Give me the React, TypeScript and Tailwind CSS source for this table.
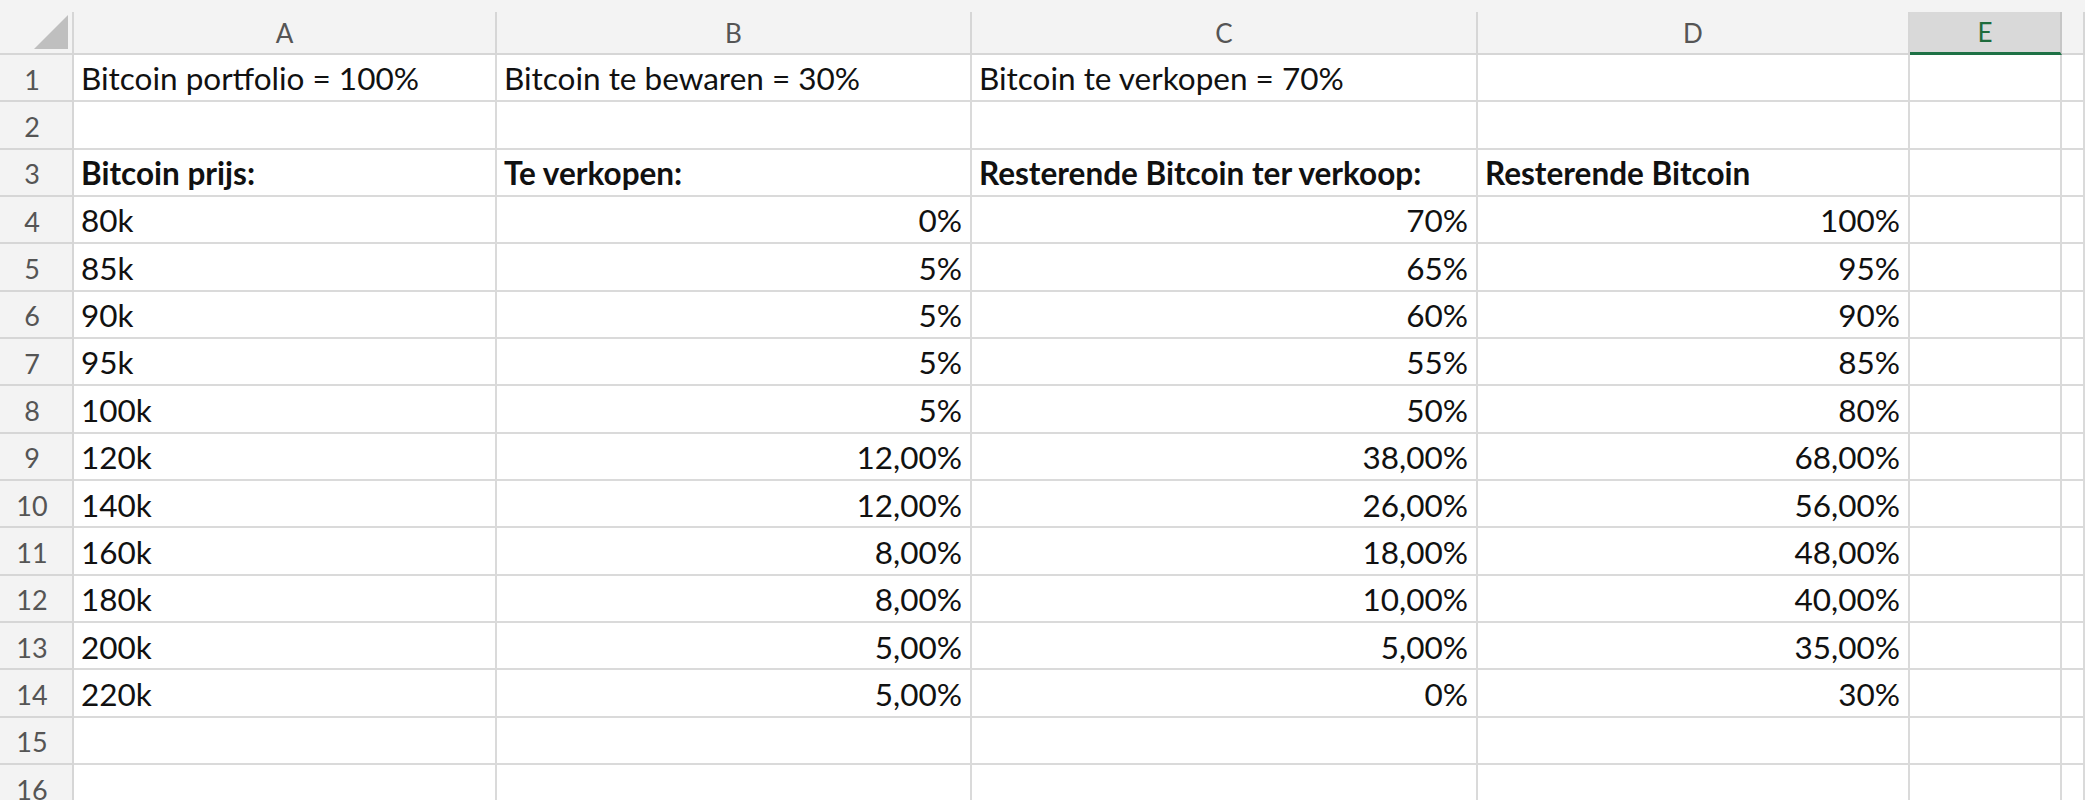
import React from "react";

const COLS =
  "grid grid-cols-[74px_423px_475px_506px_432px_152px_1fr] grid-rows-[100%]";

const LETTERS = ["A", "B", "C", "D", "E", ""];

type Row = {
  a?: string;
  b?: string;
  c?: string;
  d?: string;
  bold?: boolean;
  num?: boolean;
};

const ROWS: Row[] = [
  { a: "Bitcoin portfolio = 100%", b: "Bitcoin te bewaren = 30%", c: "Bitcoin te verkopen = 70%" },
  {},
  { a: "Bitcoin prijs:", b: "Te verkopen:", c: "Resterende Bitcoin ter verkoop:", d: "Resterende Bitcoin", bold: true },
  { a: "80k", b: "0%", c: "70%", d: "100%", num: true },
  { a: "85k", b: "5%", c: "65%", d: "95%", num: true },
  { a: "90k", b: "5%", c: "60%", d: "90%", num: true },
  { a: "95k", b: "5%", c: "55%", d: "85%", num: true },
  { a: "100k", b: "5%", c: "50%", d: "80%", num: true },
  { a: "120k", b: "12,00%", c: "38,00%", d: "68,00%", num: true },
  { a: "140k", b: "12,00%", c: "26,00%", d: "56,00%", num: true },
  { a: "160k", b: "8,00%", c: "18,00%", d: "48,00%", num: true },
  { a: "180k", b: "8,00%", c: "10,00%", d: "40,00%", num: true },
  { a: "200k", b: "5,00%", c: "5,00%", d: "35,00%", num: true },
  { a: "220k", b: "5,00%", c: "0%", d: "30%", num: true },
  {},
  {},
];

function Corner() {
  return (
    <div className="relative h-full border-r-2 border-b-2 border-[#d6d6d6] bg-[#f3f3f3]">
      <svg width="74" height="43" className="absolute left-0 top-0">
        <polygon points="34,37 68,3 68,37" fill="#bfbfbf" />
      </svg>
    </div>
  );
}

function Cell({ text, right, bold }: { text?: string; right?: boolean; bold?: boolean }) {
  return (
    <div
      className={`flex items-center whitespace-nowrap border-r-2 border-b-2 border-[#dadada] bg-white pt-[3px] leading-none text-[#111] ${
        right ? "justify-end pr-[8px]" : "pl-[7px]"
      } ${bold ? "font-bold" : ""}`}
    >
      {text}
    </div>
  );
}

export default function App() {
  return (
    <div className="h-[800px] w-full overflow-hidden bg-white font-['Lato',sans-serif]">
      <div className="h-[12px] bg-[#f3f3f3]" />
      <div className={`${COLS} h-[43px]`}>
        <Corner />
        {LETTERS.map((l, i) => (
          <div
            key={i}
            className={`flex items-center justify-center leading-none text-[26px] ${
              l === "E"
                ? "border-r-2 border-b-[3px] border-r-[#c6c6c6] border-b-[#1e7145] bg-[#d9d9d9] text-[#1e6b3c]"
                : "border-r-2 border-b-2 border-[#d6d6d6] bg-[#f3f3f3] text-[#555]"
            }`}
          >
            {l}
          </div>
        ))}
      </div>
      {ROWS.map((r, i) => (
        <div key={i} className={`${COLS} h-[47.35px] text-[31.5px]`}>
          <div className="flex items-center justify-center border-r-2 border-b-2 border-[#d6d6d6] bg-[#f3f3f3] pr-[8px] pt-[3px] leading-none text-[27px] text-[#555]">
            {i + 1}
          </div>
          <Cell text={r.a} bold={r.bold} />
          <Cell text={r.b} bold={r.bold} right={r.num} />
          <Cell text={r.c} bold={r.bold} right={r.num} />
          <Cell text={r.d} bold={r.bold} right={r.num} />
          <Cell />
          <Cell />
        </div>
      ))}
    </div>
  );
}
